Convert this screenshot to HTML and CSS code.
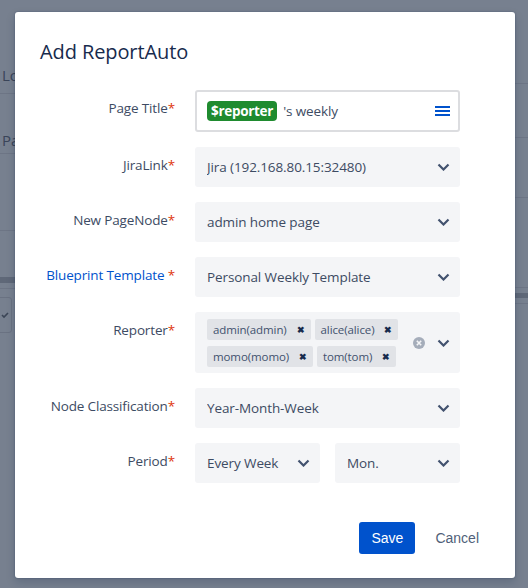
FILE: index.html
```html
<!DOCTYPE html>
<html>
<head>
<meta charset="utf-8">
<link rel="stylesheet" href="styles.css">
</head>
<body>
<div class="backdrop">
  <div class="bg-text bg-lo">Lo</div>
  <div class="bg-line bg-l1"></div>
  <div class="bg-text bg-pa">Pa</div>
  <div class="bg-line bg-l2"></div>
  <div class="bg-line bg-l3"></div>
  <div class="bg-band"></div>
  <div class="bg-line bg-l4"></div>
  <div class="bg-check"><svg width="8" height="8" viewBox="0 0 8 8"><path d="M1 4l2 2 4-4" fill="none" stroke="#3b4556" stroke-width="1.6"/></svg></div>
  <div class="bg-line bg-r1"></div>
  <div class="bg-line bg-r2"></div>
  <div class="bg-line bg-r3"></div>
  <div class="bg-line bg-r4"></div>
  <div class="bg-band bg-rb"></div>
  <div class="bg-line bg-r5"></div>
</div>
<div class="modal">
  <h1 class="title">Add ReportAuto</h1>
  <div class="form">
    <label class="label">Page Title<span class="req">*</span></label>
    <div class="field field-title">
      <span class="var-tag">$reporter</span>
      <span class="title-text">'s weekly</span>
      <svg class="menu-icon" width="15" height="12" viewBox="0 0 15 12"><rect x="0" y="1" width="15" height="2" fill="#0052cc"/><rect x="0" y="5" width="15" height="2" fill="#0052cc"/><rect x="0" y="9" width="15" height="2" fill="#0052cc"/></svg>
    </div>

    <label class="label">JiraLink<span class="req">*</span></label>
    <div class="field select"><span>Jira (192.168.80.15:32480)</span><svg class="chev" width="13" height="8" viewBox="0 0 13 8"><path d="M1.5 1.5l5 5 5-5" fill="none" stroke="#42526e" stroke-width="2.2"/></svg></div>

    <label class="label">New PageNode<span class="req">*</span></label>
    <div class="field select"><span>admin home page</span><svg class="chev" width="13" height="8" viewBox="0 0 13 8"><path d="M1.5 1.5l5 5 5-5" fill="none" stroke="#42526e" stroke-width="2.2"/></svg></div>

    <label class="label label-link">Blueprint Template <span class="req">*</span></label>
    <div class="field select"><span>Personal Weekly Template</span><svg class="chev" width="13" height="8" viewBox="0 0 13 8"><path d="M1.5 1.5l5 5 5-5" fill="none" stroke="#42526e" stroke-width="2.2"/></svg></div>

    <label class="label">Reporter<span class="req">*</span></label>
    <div class="field multi">
      <div class="tags">
        <span class="tag">admin(admin)<b class="x">✖</b></span>
        <span class="tag">alice(alice)<b class="x">✖</b></span>
        <span class="tag">momo(momo)<b class="x">✖</b></span>
        <span class="tag">tom(tom)<b class="x">✖</b></span>
      </div>
      <svg class="clear" width="12" height="12" viewBox="0 0 12 12"><circle cx="6" cy="6" r="6" fill="#a5adba"/><path d="M3.8 3.8l4.4 4.4M8.2 3.8l-4.4 4.4" stroke="#f4f5f7" stroke-width="1.6"/></svg>
      <svg class="chev" width="13" height="8" viewBox="0 0 13 8"><path d="M1.5 1.5l5 5 5-5" fill="none" stroke="#42526e" stroke-width="2.2"/></svg>
    </div>

    <label class="label">Node Classification<span class="req">*</span></label>
    <div class="field select"><span>Year-Month-Week</span><svg class="chev" width="13" height="8" viewBox="0 0 13 8"><path d="M1.5 1.5l5 5 5-5" fill="none" stroke="#42526e" stroke-width="2.2"/></svg></div>

    <label class="label">Period<span class="req">*</span></label>
    <div class="period">
      <div class="field select"><span>Every Week</span><svg class="chev" width="13" height="8" viewBox="0 0 13 8"><path d="M1.5 1.5l5 5 5-5" fill="none" stroke="#42526e" stroke-width="2.2"/></svg></div>
      <div class="field select"><span>Mon.</span><svg class="chev" width="13" height="8" viewBox="0 0 13 8"><path d="M1.5 1.5l5 5 5-5" fill="none" stroke="#42526e" stroke-width="2.2"/></svg></div>
    </div>
  </div>
  <div class="footer">
    <button class="btn btn-save">Save</button>
    <button class="btn btn-cancel">Cancel</button>
  </div>
</div>
</body>
</html>
```

FILE: styles.css
```css
* { box-sizing: border-box; }
html, body {
  margin: 0;
  padding: 0;
}
body {
  width: 528px;
  height: 588px;
  overflow: hidden;
  background: #77808f;
  font-family: "Open Sans", "Noto Sans", sans-serif;
  position: relative;
  padding-top: 12px;
}
.backdrop {
  position: absolute;
  inset: 0;
}
.bg-text {
  position: absolute;
  left: 2px;
  font-size: 15px;
  color: #3a4559;
}
.bg-lo { top: 65px; }
.bg-pa { top: 130px; }
.bg-line {
  position: absolute;
  height: 1px;
  background: #6d7585;
}
.bg-l1 { left: 0; width: 20px; top: 93px; }
.bg-l2 { left: 0; width: 20px; top: 153px; }
.bg-l3 { left: 0; width: 20px; top: 230px; }
.bg-l4 { left: 0; width: 20px; top: 288px; }
.bg-band {
  position: absolute;
  left: 0;
  width: 20px;
  top: 277px;
  height: 6px;
  background: #5f6878;
}
.bg-check {
  position: absolute;
  left: -6px;
  top: 297px;
  width: 18px;
  height: 36px;
  border: 1px solid #6a7282;
  border-radius: 3px;
  display: flex;
  align-items: center;
  justify-content: flex-end;
  padding-right: 2px;
}
.bg-r1 { left: 515px; width: 13px; top: 83px; }
.bg-r2 { left: 515px; width: 13px; top: 137px; }
.bg-r3 { left: 515px; width: 13px; top: 197px; }
.bg-r4 { left: 515px; width: 13px; top: 287px; }
.bg-rb { left: 515px; width: 13px; top: 293px; height: 5px; }
.bg-r5 { left: 515px; width: 13px; top: 303px; }

.modal {
  position: relative;
  margin-left: 15px;
  width: 500px;
  height: 566px;
  background: #ffffff;
  border-radius: 3px;
  box-shadow: 0 0 2px rgba(9, 30, 66, 0.35), 0 4px 10px rgba(9, 30, 66, 0.2);
  padding-top: 28px;
}
.title {
  margin: 0 0 26px 25px;
  font-size: 20px;
  line-height: 24px;
  font-weight: 500;
  color: #172b4d;
  letter-spacing: -0.1px;
}
.form {
  display: grid;
  grid-template-columns: 160px 265px;
  column-gap: 20px;
  row-gap: 15px;
}
.label {
  text-align: right;
  font-size: 13.5px;
  line-height: 20px;
  padding-top: 8px;
  color: #3d4b63;
  white-space: nowrap;
  letter-spacing: -0.15px;
}
.label-link { color: #0052cc; }
.req { color: #de350b; }
.field {
  height: 40px;
  background: #f4f5f7;
  border-radius: 3px;
  display: flex;
  align-items: center;
  padding: 0 10px 0 12px;
  font-size: 13.5px;
  color: #3d4b63;
  letter-spacing: -0.1px;
}
.select span { flex: 1; white-space: nowrap; overflow: hidden; }
.chev { flex: none; }
.field-title {
  height: 42px;
  background: #ffffff;
  border: 2px solid #dcdde0;
  padding: 0 8px 0 10px;
}
.var-tag {
  background: #1f8b2f;
  color: #ffffff;
  font-weight: 700;
  font-size: 13.5px;
  line-height: 20px;
  padding: 0 4px;
  border-radius: 4px;
  letter-spacing: -0.3px;
}
.title-text {
  flex: 1;
  margin-left: 6px;
  color: #3d4b63;
}
.menu-icon { flex: none; }
.multi {
  height: 61px;
  padding: 0 10px 0 12px;
}
.tags {
  flex: 1;
  display: flex;
  flex-wrap: wrap;
  gap: 6px 4px;
  width: 200px;
}
.tag {
  background: #e1e3e7;
  border-radius: 2px;
  height: 21px;
  display: inline-flex;
  align-items: center;
  padding: 0 6px 0 6px;
  font-size: 11.5px;
  letter-spacing: -0.1px;
  color: #42526e;
  white-space: nowrap;
}
.x {
  font-size: 9px;
  color: #172b4d;
  margin-left: 10px;
}
.clear { flex: none; margin-right: 12px; }
.period {
  display: flex;
  gap: 15px;
}
.period .field { width: 125px; }
.footer {
  display: flex;
  justify-content: flex-end;
  align-items: center;
  padding: 0 25px 0 0;
  margin-top: 39px;
}
.btn {
  font-family: "Liberation Sans", Arial, sans-serif;
  font-size: 14px;
  border: none;
  border-radius: 3px;
  height: 32px;
  cursor: pointer;
}
.btn-save {
  background: #0052cc;
  color: #ffffff;
  width: 56px;
  font-weight: 500;
}
.btn-cancel {
  background: transparent;
  color: #505f79;
  padding: 0 11px;
  margin-left: 9px;
}
```
